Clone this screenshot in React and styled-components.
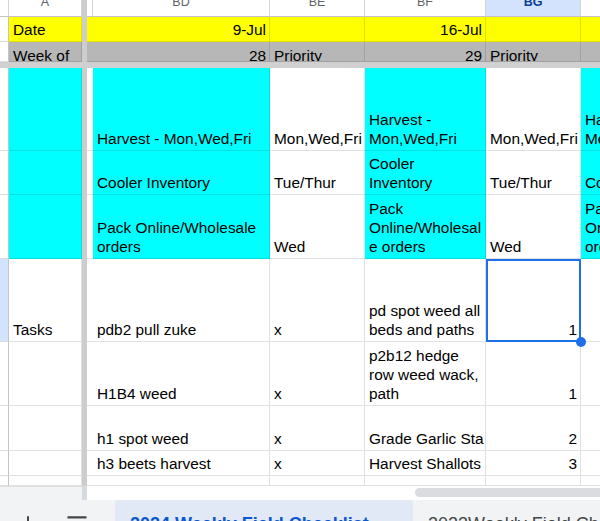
import React from 'react';
import styled, { createGlobalStyle } from 'styled-components';
import { Plus, Menu } from 'lucide-react';

const YELLOW = '#ffff00';
const CYAN = '#00ffff';
const GRAY = '#b7b7b7';
const COLS = '9px 73px 5px 6px 177px 95px 121px 95px 130px';

const GlobalStyle = createGlobalStyle`
  html, body {
    margin: 0;
    padding: 0;
    background: #fff;
    overflow: hidden;
  }
  body {
    font-family: 'Liberation Sans', Arial, sans-serif;
  }
`;

const Sheet = styled.div`
  width: 600px;
  height: 521px;
  overflow: hidden;
  display: flex;
  flex-direction: column;
`;

const Grid = styled.div`
  height: 486px;
  flex: none;
  display: flex;
  flex-direction: column;
  overflow: hidden;
`;

const Row = styled.div`
  display: grid;
  grid-template-columns: ${COLS};
  height: ${(p) => p.$h}px;
  flex: none;
`;

const ColHead = styled.div`
  box-sizing: border-box;
  border-right: 1px solid #d4d4d4;
  border-bottom: 1px solid #c4c4c4;
  background: ${(p) => (p.$active ? '#d3e3fd' : '#fff')};
  color: ${(p) => (p.$active ? '#0b3f93' : '#5f6368')};
  font-weight: ${(p) => (p.$active ? 700 : 400)};
  font-size: 12.5px;
  line-height: 14px;
  display: flex;
  align-items: flex-end;
  justify-content: center;
  padding-bottom: 7px;
  overflow: hidden;
`;

const RowHead = styled.div`
  box-sizing: border-box;
  background: ${(p) => (p.$active ? '#d3e3fd' : '#fff')};
  border-right: 1px solid #c4c4c4;
  border-bottom: 1px solid #dcdcdc;
`;

const FreezeV = styled.div`
  background: #cdcdcd;
`;

const FreezeBar = styled.div`
  height: 6px;
  flex: none;
  background: #d0d0d0;
`;

const CellBox = styled.div`
  box-sizing: border-box;
  min-width: 0;
  background: ${(p) => p.$bg || '#fff'};
  border-right: 1px solid rgba(0, 0, 0, 0.12);
  border-bottom: 1px solid rgba(0, 0, 0, 0.12);
  display: flex;
  flex-direction: column;
  justify-content: flex-end;
  align-items: ${(p) => (p.$align === 'right' ? 'flex-end' : 'flex-start')};
  text-align: ${(p) => p.$align || 'left'};
  padding: ${(p) => (p.$tight ? '0 3px 0 4px' : '0 3px 2px 4px')};
  font-size: 15.4px;
  line-height: ${(p) => (p.$tight ? '11px' : '19px')};
  color: #000;
  white-space: nowrap;
  overflow: ${(p) => (p.$selected ? 'visible' : 'hidden')};
  position: ${(p) => (p.$selected ? 'relative' : 'static')};
  z-index: ${(p) => (p.$selected ? 2 : 'auto')};
`;

const Line = styled.span`
  display: block;
`;

const Selection = styled.span`
  position: absolute;
  top: 0;
  left: 0;
  right: -1px;
  bottom: -1px;
  border: 2px solid #1f6fe8;
  pointer-events: none;
`;

const Handle = styled.span`
  position: absolute;
  right: -7px;
  bottom: -7px;
  width: 10px;
  height: 10px;
  border-radius: 50%;
  background: #1f6fe8;
`;

const Cell = ({ text, selected, ...rest }) => {
  const lines = text == null ? [] : [].concat(text);
  return (
    <CellBox $selected={selected} {...rest}>
      {lines.map((l, i) => (
        <Line key={i}>{l}</Line>
      ))}
      {selected && (
        <Selection>
          <Handle />
        </Selection>
      )}
    </CellBox>
  );
};

const ScrollRow = styled.div`
  height: 14px;
  flex: none;
  display: flex;
`;

const ScrollLeft = styled.div`
  width: 82px;
  flex: none;
  background: #f1f3f4;
  border-top: 1px solid #e0e0e0;
  box-sizing: border-box;
`;

const ScrollSplit = styled.div`
  width: 5px;
  flex: none;
  background: #d6dae0;
`;

const ScrollTrack = styled.div`
  flex: 1;
  background: #fff;
  padding: 2px 0 0 328px;
`;

const Thumb = styled.div`
  width: 320px;
  height: 9px;
  border-radius: 5px;
  background: #dadce0;
`;

const TabBar = styled.div`
  height: 21px;
  flex: none;
  display: flex;
  align-items: flex-start;
  background: #f1f3f4;
  overflow: hidden;
`;

const IconButton = styled.div`
  flex: none;
  margin-left: ${(p) => p.$ml}px;
  padding-top: ${(p) => p.$pt}px;
  color: #444746;
  display: flex;
`;

const Tab = styled.div`
  flex: none;
  width: ${(p) => p.$w}px;
  box-sizing: border-box;
  height: 21px;
  padding: 14px 0 0 15px;
  background: ${(p) => (p.$active ? '#e1e9f7' : 'transparent')};
  color: ${(p) => (p.$active ? '#0b57d0' : '#444746')};
  font-weight: ${(p) => (p.$active ? 700 : 400)};
  font-size: 18px;
  line-height: 20px;
  white-space: nowrap;
  overflow: hidden;
`;

const App = () => {
  return (
    <Sheet>
      <GlobalStyle />
      <Grid>
        <Row $h={17}>
          <ColHead />
          <ColHead>A</ColHead>
          <FreezeV />
          <ColHead />
          <ColHead>BD</ColHead>
          <ColHead>BE</ColHead>
          <ColHead>BF</ColHead>
          <ColHead $active>BG</ColHead>
          <ColHead>BH</ColHead>
        </Row>

        <Row $h={25}>
          <RowHead />
          <Cell $bg={YELLOW} text="Date" />
          <FreezeV />
          <Cell $bg={YELLOW} />
          <Cell $bg={YELLOW} $align="right" text="9-Jul" />
          <Cell $bg={YELLOW} />
          <Cell $bg={YELLOW} $align="right" text="16-Jul" />
          <Cell $bg={YELLOW} />
          <Cell $bg={YELLOW} />
        </Row>

        <Row $h={20}>
          <RowHead />
          <Cell $bg={GRAY} $tight text="Week of" />
          <FreezeV />
          <Cell $bg={GRAY} $tight />
          <Cell $bg={GRAY} $tight $align="right" text="28" />
          <Cell $bg={GRAY} $tight text="Priority" />
          <Cell $bg={GRAY} $tight $align="right" text="29" />
          <Cell $bg={GRAY} $tight text="Priority" />
          <Cell $bg={GRAY} $tight />
        </Row>

        <FreezeBar />

        <Row $h={83}>
          <RowHead />
          <Cell $bg={CYAN} />
          <FreezeV />
          <Cell />
          <Cell $bg={CYAN} text="Harvest - Mon,Wed,Fri" />
          <Cell text="Mon,Wed,Fri" />
          <Cell $bg={CYAN} text={['Harvest -', 'Mon,Wed,Fri']} />
          <Cell text="Mon,Wed,Fri" />
          <Cell $bg={CYAN} text={['Harvest -', 'Mon,Wed,Fri']} />
        </Row>

        <Row $h={44}>
          <RowHead />
          <Cell $bg={CYAN} />
          <FreezeV />
          <Cell />
          <Cell $bg={CYAN} text="Cooler Inventory" />
          <Cell text="Tue/Thur" />
          <Cell $bg={CYAN} text={['Cooler', 'Inventory']} />
          <Cell text="Tue/Thur" />
          <Cell $bg={CYAN} text="Cooler Inventory" />
        </Row>

        <Row $h={64}>
          <RowHead />
          <Cell $bg={CYAN} />
          <FreezeV />
          <Cell />
          <Cell $bg={CYAN} text={['Pack Online/Wholesale', 'orders']} />
          <Cell text="Wed" />
          <Cell $bg={CYAN} text={['Pack', 'Online/Wholesal', 'e orders']} />
          <Cell text="Wed" />
          <Cell $bg={CYAN} text={['Pack', 'Online/Wholesale', 'orders']} />
        </Row>

        <Row $h={83}>
          <RowHead $active />
          <Cell text="Tasks" />
          <FreezeV />
          <Cell />
          <Cell text="pdb2 pull zuke" />
          <Cell text="x" />
          <Cell text={['pd spot weed all', 'beds and paths']} />
          <Cell $align="right" text="1" selected />
          <Cell />
        </Row>

        <Row $h={64}>
          <RowHead />
          <Cell />
          <FreezeV />
          <Cell />
          <Cell text="H1B4 weed" />
          <Cell text="x" />
          <Cell text={['p2b12 hedge', 'row weed wack,', 'path']} />
          <Cell $align="right" text="1" />
          <Cell />
        </Row>

        <Row $h={45}>
          <RowHead />
          <Cell />
          <FreezeV />
          <Cell />
          <Cell text="h1 spot weed" />
          <Cell text="x" />
          <Cell text="Grade Garlic Sta" />
          <Cell $align="right" text="2" />
          <Cell />
        </Row>

        <Row $h={25}>
          <RowHead />
          <Cell />
          <FreezeV />
          <Cell />
          <Cell text="h3 beets harvest" />
          <Cell text="x" />
          <Cell text="Harvest Shallots" />
          <Cell $align="right" text="3" />
          <Cell />
        </Row>

        <Row $h={10}>
          <RowHead />
          <Cell />
          <FreezeV />
          <Cell />
          <Cell />
          <Cell />
          <Cell />
          <Cell />
          <Cell />
        </Row>
      </Grid>

      <ScrollRow>
        <ScrollLeft />
        <ScrollSplit />
        <ScrollTrack>
          <Thumb />
        </ScrollTrack>
      </ScrollRow>

      <TabBar>
        <IconButton $ml={16} $pt={12}>
          <Plus size={24} strokeWidth={2} />
        </IconButton>
        <IconButton $ml={24} $pt={12}>
          <Menu size={26} strokeWidth={2} />
        </IconButton>
        <IconButton $ml={25} $pt={0} />
        <Tab $active $w={298}>2024 Weekly Field Checklist</Tab>
        <Tab $w={300}>2023Weekly Field Checklist</Tab>
      </TabBar>
    </Sheet>
  );
};

export default App;
